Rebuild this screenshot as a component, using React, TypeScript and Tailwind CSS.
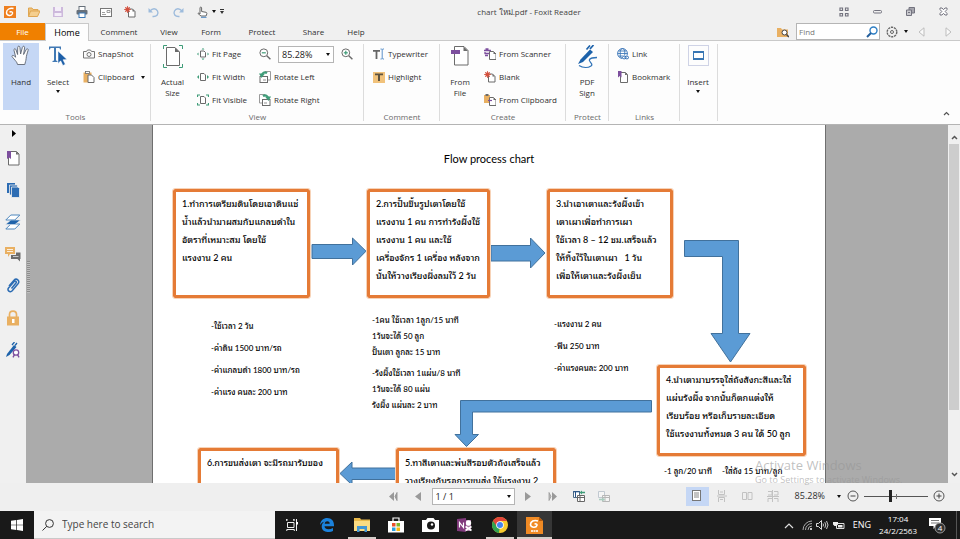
import React from "react";
import type { ReactNode } from "react";

const GREEN = "#3f9c78";
const PURPLE = "#7d4f9e";
const BLUE = "#2c6cb3";
const AMBER = "#e9b062";
const INK = "#6b6b6b";

type IconProps = { w?: number; h?: number; box?: string; children: ReactNode };

function Icon({ w = 12, h = 12, box, children }: IconProps) {
  return (
    <svg width={w} height={h} viewBox={box ?? `0 0 ${w} ${h}`} fill="none" className="shrink-0" aria-hidden="true">
      {children}
    </svg>
  );
}

function Caret({ className = "" }: { className?: string }) {
  return (
    <svg width="4" height="3" viewBox="0 0 4 3" className={`shrink-0 ${className}`} aria-hidden="true">
      <path d="M0 0h4L2 3z" fill="#111" />
    </svg>
  );
}

const PageShape = ({ x = 4, y = 3 }: { x?: number; y?: number }) => (
  <g transform={`translate(${x} ${y})`}>
    <path d="M.5.5h4l2.500 2.500v5.500h-6.500z" fill="#fff" stroke={INK} />
    <path d="M4.500.5v2.500H7z" fill={INK} />
  </g>
);

const Magnifier = ({ plus = false }: { plus?: boolean }) => (
  <Icon>
    <circle cx="4.800" cy="4.800" r="3.900" stroke={INK} fill="#fff" />
    <path d="M7.800 7.800l3.600 3.400" stroke={INK} strokeWidth="1.500" />
    <path d="M2.800 4.800h4" stroke={GREEN} strokeWidth="1.200" />
    {plus && <path d="M4.800 2.800v4" stroke={GREEN} strokeWidth="1.200" />}
  </Icon>
);

const FitPageIcon = () => (
  <Icon>
    <path d="M3.500 3h3.500l1.500 1.500V9h-5z" stroke={INK} fill="#fff" />
    <path d="M4.500 1.500L6 0l1.500 1.500zM4.500 10.500L6 12l1.500-1.500zM1.500 4.500L0 6l1.500 1.500zM10.500 4.500L12 6l-1.500 1.500z" fill={GREEN} />
  </Icon>
);
const FitWidthIcon = () => (
  <Icon>
    <path d="M3.500 2.500h3.500l1.500 1.500v5.500h-5z" stroke={INK} fill="#fff" />
    <path d="M2 4L0 6l2 2zM10 4l2 2-2 2z" fill={GREEN} />
  </Icon>
);
const FitVisibleIcon = () => (
  <Icon>
    <path d="M3.500 2.500h3.500l1.500 1.500v5.500h-5z" stroke={INK} fill="#fff" />
    <path d="M.500 3V1H3M9 1h2.500v2M.500 9v2H3M9 11h2.500V9" stroke={GREEN} strokeWidth="1.200" />
  </Icon>
);
const RotateIcon = ({ right = false }: { right?: boolean }) => (
  <Icon>
    <g transform={right ? "translate(12 0) scale(-1 1)" : undefined}>
      <path d="M6 .500h5.500v8.500h-2.500" stroke="#9a9a9a" fill="#fff" />
      <rect x="1" y="5.500" width="7.500" height="6" fill="#fff" stroke={INK} />
      <path d="M8 2.200C5.500.500 3 1.500 3 5" stroke={GREEN} strokeWidth="2" />
      <path d="M0 2.500h6L2.500 7z" fill={GREEN} />
      <path d="M4 8h3v2H4z" fill="#c8c8c8" />
    </g>
  </Icon>
);
const SnapshotIcon = () => (
  <Icon>
    <path d="M.500 3.500h3l1-1.500h3l1 1.500h3v6.500H.500z" stroke="#777" fill="#fafafa" />
    <circle cx="6" cy="6.500" r="2" stroke="#777" />
  </Icon>
);
const ClipboardIcon = () => (
  <Icon>
    <rect x=".500" y="1.500" width="8" height="10" fill={AMBER} />
    <rect x="2.500" y=".500" width="4" height="2" fill="#fff" stroke={INK} strokeWidth=".800" />
    <g transform="translate(4.500 3.500)">
      <path d="M.500.500h3.500l2.500 2.500v5h-6z" fill="#fff" stroke={INK} />
    </g>
  </Icon>
);
const TypewriterIcon = () => (
  <Icon>
    <path d="M0 2h7v1.800H4.400V11H2.600V3.800H0z" fill="#666" />
    <path d="M7.500 1h1.200l.500.500.500-.500H11M9.200 1.500v9M7.500 11h1.200l.500-.500.500.500H11" stroke="#4a86c5" strokeWidth=".900" />
  </Icon>
);
const HighlightIcon = () => (
  <Icon>
    <rect x="0" y="1" width="12" height="11" fill="#f1c27b" />
    <path d="M2 2.500h8v1.800H7V10H5V4.300H2z" fill="#5e5340" />
  </Icon>
);
const ScannerIcon = () => (
  <Icon>
    <path d="M0 2.500h7M1.500 1h3M.500 5.500h5M1 7.500h3M1 4v2" stroke={PURPLE} strokeWidth="1.300" />
    <PageShape x={5} y={3} />
  </Icon>
);
const BlankIcon = () => (
  <Icon>
    <PageShape x={4} y={2.5} />
    <circle cx="3.500" cy="3.500" r="2.200" fill="#d4503e" />
    <path d="M3.500 0v7M0 3.500h7M1 1l5 5M6 1L1 6" stroke="#d4503e" strokeWidth=".800" />
  </Icon>
);
const FromClipboardIcon = () => (
  <Icon>
    <rect x="0" y="1" width="6" height="8" fill={AMBER} />
    <rect x="1.500" y="0" width="3" height="2" fill={INK} />
    <PageShape x={5} y={3} />
    <path d="M4 6.500h4" stroke={PURPLE} strokeWidth="1.200" />
  </Icon>
);
const LinkIcon = () => (
  <Icon>
    <circle cx="5.500" cy="5.500" r="4.900" stroke={BLUE} strokeWidth=".900" />
    <ellipse cx="5.500" cy="5.500" rx="2.300" ry="4.900" stroke={BLUE} strokeWidth=".800" />
    <path d="M.600 5.500h10M1.500 3h8M1.500 8h5" stroke={BLUE} strokeWidth=".800" />
    <rect x="5" y="7.500" width="7" height="4" rx="2" fill="#fff" />
    <rect x="5.500" y="8.200" width="3.500" height="2.600" rx="1.300" stroke={BLUE} />
    <rect x="8" y="8.200" width="3.500" height="2.600" rx="1.300" stroke={BLUE} />
  </Icon>
);
const BookmarkIcon = () => (
  <Icon>
    <path d="M3.500 1.500h5l2 2v8h-7z" fill="#fff" stroke={INK} />
    <path d="M8 1.500v2.500h2.500z" fill={INK} />
    <path d="M1 0h3.500v6.500L2.800 5 1 6.500z" fill={PURPLE} />
  </Icon>
);

const HandIcon = () => (
  <Icon w={20} h={21}>
    <path
      d="M6.500 19.500c-.500-2.500-2-3.600-3.600-5.600C1.700 12.400.700 11.600 1 10.900c.600-1.100 2-.300 3.700 1.300L3 5.300c-.400-1.700 1.500-2.200 2-.500l1.600 4.700L6.700 2.500c0-1.800 2.100-1.800 2.200 0l.700 6.500L11.400 2.300c.500-1.700 2.400-1.300 2.200.500l-1 6.700L15.200 4.500c.900-1.400 2.400-.600 1.900.900-1.200 3.800-1.700 5.200-2 8.300-.200 2.500-.900 3.600-1.300 5.800z"
      fill="#fdfdfd"
      stroke="#5d6470"
      strokeWidth=".900"
    />
  </Icon>
);
const SelectIcon = () => (
  <Icon w={20} h={21}>
    <path d="M1 1.500h12v3h-1l-.500-1.500H8v12.500l1.500.500v1H4.500v-1l1.500-.500V3H2.500L2 4.500H1z" fill="#4179b4" />
    <path d="M10 6l9 8.500-4 .3 2.300 4.500-2.400 1.200-2.200-4.700L10 18.500z" fill="#1d5fa8" stroke="#fff" strokeWidth=".500" />
  </Icon>
);
const ActualSizeIcon = () => (
  <Icon w={20} h={23}>
    <path d="M3.500 2.500h8.500l4.500 4.500v13.500h-13z" fill="#fff" stroke={INK} />
    <path d="M12 2.500v4.500h4.500z" fill={INK} />
    <path d="M.500 4V.500H4M16 .500h3.500V4M.500 19v3.500H4M16 22.500h3.500V19" stroke={GREEN} />
  </Icon>
);
const FromFileIcon = () => (
  <Icon w={20} h={21}>
    <path d="M4.500 1.500h9.500l4 4v14.500h-13.500z" fill="#fff" stroke={INK} />
    <path d="M13.500 1.500v4.500h4.500z" fill={INK} />
    <rect x="1" y="5" width="9" height="4" fill={PURPLE} />
  </Icon>
);
const PdfSignIcon = () => (
  <Icon w={22} h={24}>
    <path d="M4.500 14.500L14 4.500l3 2.600L7 17l-5 2z" fill="#1d62aa" />
    <path d="M10.500 4.500L14 .500M14 4l3.500-4" stroke="#1d62aa" strokeWidth="1.700" />
    <path d="M3 20.500c4 2.500 9 2.500 12 .500 3-2.200-3-4.500-1.500-6.500s4-2 7.500-2" stroke="#3274b8" strokeWidth="1.300" />
  </Icon>
);
const InsertIcon = () => (
  <span className="flex h-[21px] w-[21px] items-center justify-center border border-[#cfd3e6]">
    <Icon w={11} h={9}>
      <rect x=".500" y=".500" width="10" height="8" fill="#fff" stroke="#3876b4" />
      <path d="M0 1h11M0 8h11" stroke="#3876b4" strokeWidth="2" />
    </Icon>
  </span>
);

function BigButton({ icon, lines, caret, active, className = "" }: { icon: ReactNode; lines: string[]; caret?: boolean; active?: boolean; className?: string }) {
  return (
    <button type="button" className={`flex h-[67px] flex-col items-center text-[8px] leading-[11px] ${active ? "bg-[#c5d7f5]" : ""} ${className}`}>
      <span className="flex h-[33px] items-start pt-0.5">{icon}</span>
      {lines.map((line) => (
        <span key={line} className="whitespace-nowrap">{line}</span>
      ))}
      {caret && <Caret className="mt-[3px]" />}
    </button>
  );
}

function Row({ icon, label, caret }: { icon: ReactNode; label: string; caret?: boolean }) {
  return (
    <button type="button" className="mb-px flex h-[22px] items-center gap-[3px] whitespace-nowrap text-[8px]">
      {icon}
      <span>{label}</span>
      {caret && <Caret className="ml-1" />}
    </button>
  );
}

function Group({ title, className = "", children }: { title: string; className?: string; children: ReactNode }) {
  return (
    <section aria-label={title || "Insert"} className={`relative flex shrink-0 flex-col pt-0.5 after:absolute after:right-0 after:top-[3px] after:bottom-[3px] after:w-px after:bg-[#dcdcdc] ${className}`}>
      <div className="flex h-[69px] items-start">{children}</div>
      <div className="text-center text-[8px] leading-[10px] text-[#6a6a6a]">{title}</div>
    </section>
  );
}

function QuickAccess() {
  const items: { name: string; icon: ReactNode }[] = [
    { name: "Foxit", icon: <FoxitMark /> },
    { name: "Open", icon: <Icon><path d="M.500 10.500V2h3.500l1 1.500h5V5" fill="#f0c27a" stroke="#dfa652" /><path d="M.500 10.500L2.500 5H12l-2.500 5.500z" fill="#f5cf8f" stroke="#dfa652" /></Icon> },
    { name: "Save", icon: <Icon><path d="M1 1h10v10H1z" fill="#cdb9dc" /><rect x="3" y="1" width="6" height="4" fill="#f4eef8" /><rect x="2.500" y="7" width="7" height="3" fill="#f4eef8" /></Icon> },
    { name: "Print", icon: <Icon><rect x="3" y=".500" width="6" height="4" fill="#fff" stroke="#67707a" /><rect x=".500" y="4" width="11" height="4.500" rx="1" fill="#67707a" /><rect x="3" y="7" width="6" height="4.500" fill="#fff" stroke="#3b78b5" /></Icon> },
    { name: "Email", icon: <Icon><rect x=".500" y="2.500" width="11" height="8" fill="#fff" stroke="#777" /><path d="M2 8.500h4M2 6.500h3M7 4.500h3v2H7z" stroke="#888" strokeWidth=".800" /></Icon> },
    { name: "New", icon: <BlankIcon /> },
    { name: "Undo", icon: <Icon><path d="M4.500 10.500C9 11 11 8 9.500 5S4.500 2 2 5" stroke="#9dbbdc" strokeWidth="1.400" /><path d="M.500 2v4.500H5z" fill="#9dbbdc" /></Icon> },
    { name: "Redo", icon: <Icon><path d="M7.500 10.500C3 11 1 8 2.500 5S7.500 2 10 5" stroke="#9dbbdc" strokeWidth="1.400" /><path d="M11.500 2v4.500H7z" fill="#9dbbdc" /></Icon> },
    { name: "Touch mode", icon: <Icon><path d="M4 8V2c0-1.300 1.600-1.300 1.600 0v3.500l4.400.800c.800.200 1 .900.800 1.700L10 10H5L2 7.500c.300-1 1.200-.600 2 .500z" fill="#fff" stroke="#666" /><path d="M5 11.300h5.500" stroke="#4a86c5" /></Icon> },
  ];
  return (
    <div className="flex items-center gap-3 pl-1">
      {items.map((i) => (
        <button key={i.name} type="button" aria-label={i.name}>{i.icon}</button>
      ))}
      <button type="button" aria-label="Touch mode options" className="-ml-2"><Caret /></button>
      <button type="button" aria-label="Customize" className="-ml-2">
        <svg width="4" height="5" viewBox="0 0 4 5"><path d="M0 0h4v1H0zM0 2h4L2 5z" fill="#333" /></svg>
      </button>
    </div>
  );
}

function FoxitMark() {
  return (
    <Icon>
      <rect width="12" height="12" fill="#ee7f1f" />
      <path d="M9.500 2.500C6 1.500 2.500 3.500 2.500 6.500c0 3.500 5 4 6 1 .400-1.300-.500-2.200-3-1.500" stroke="#fff" strokeWidth="1.400" />
    </Icon>
  );
}

function TitleBar() {
  return (
    <header className="relative flex h-[23px] shrink-0 items-center justify-between">
      <QuickAccess />
      <h1 className="absolute inset-x-0 pl-[98px] text-center text-[8px] font-normal text-[#444]">chart ใหม่.pdf - Foxit Reader</h1>
      <div className="relative flex items-center gap-6 pr-3">
        <button type="button" aria-label="Ribbon layout"><Icon w={10} h={10}><path d="M1 1h2.500v2.500H1zM6.500 1H9v2.500H6.500zM1 6.500h2.500V9H1zM6.500 6.500H9V9H6.500z" stroke="#73737f" strokeWidth="1.200" /></Icon></button>
        <button type="button" aria-label="Minimize"><Icon w={9} h={9}><rect x=".500" y="3.500" width="8" height="2.500" rx="1" stroke="#73737f" /></Icon></button>
        <button type="button" aria-label="Restore"><Icon w={9} h={9}><path d="M3 .500h5.500V6H3z" stroke="#73737f" fill="#a5a5ad" /><path d="M.500 3h5v5.500h-5z" stroke="#73737f" fill="#c9c9ce" /><path d="M2 5.500h2" stroke="#73737f" /></Icon></button>
        <button type="button" aria-label="Close"><Icon w={9} h={9}><path d="M1 1h2l1.500 1.700L6 1h2v1.500L6.200 4.500 8 6.500V8H6L4.500 6.300 3 8H1V6.500l1.800-2L1 2.500z" stroke="#73737f" fill="#fff" /></Icon></button>
      </div>
    </header>
  );
}

const TABS: [string, string][] = [
  ["Comment", "w-[60px]"],
  ["View", "w-[40px]"],
  ["Form", "w-[44px]"],
  ["Protect", "w-[58px]"],
  ["Share", "w-[45px]"],
  ["Help", "w-[40px]"],
];

function TabRow() {
  return (
    <nav className="flex h-[18px] shrink-0 items-stretch border-b border-[#c9c9c9] text-[8px]">
      <button type="button" className="w-[45px] bg-[#f08000] text-[8px] text-white">File</button>
      <button type="button" className="-mb-px w-[44px] border border-b-0 border-[#c9c9c9] bg-[#fdfdfd] text-[9px] font-medium text-black">Home</button>
      {TABS.map(([name, width]) => (
        <button key={name} type="button" className={width}>{name}</button>
      ))}
      <div className="ml-auto flex items-center pr-2">
        <button type="button" aria-label="Search folder" className="mr-[7px]">
          <Icon><path d="M0 2h4l1 1.500h6V11H0z" fill={AMBER} /><circle cx="7.500" cy="6.500" r="2.500" fill="#fff" stroke="#444" /><path d="M9.500 8.500l2.500 2.500" stroke="#444" strokeWidth="1.500" /></Icon>
        </button>
        <label className="flex h-[17px] w-[84px] items-center border border-[#b5b5b5] bg-white pl-0.5 pr-px">
          <input aria-label="Find" placeholder="Find" className="w-full min-w-0 text-[8px] outline-none placeholder:text-[#777]" />
          <Icon><circle cx="7.500" cy="4.500" r="3.500" stroke="#2f7fc4" strokeWidth="1.400" /><path d="M5 7L1 11" stroke="#235e9c" strokeWidth="2" /></Icon>
        </label>
        <button type="button" aria-label="Settings" className="ml-1.5">
          <Icon><circle cx="6" cy="6" r="4.800" stroke="#666" strokeDasharray="2.200 .8" strokeWidth="1.400" /><circle cx="6" cy="6" r="1.500" stroke="#666" /></Icon>
        </button>
        <Caret className="ml-1.5" />
        <button type="button" aria-label="Previous result" className="ml-2.5"><Icon w={7} h={10}><path d="M6 .800v8.400L1 5z" stroke="#bdbdbd" fill="#fafafa" /></Icon></button>
        <button type="button" aria-label="Next result" className="ml-5"><Icon w={7} h={10}><path d="M1 .800v8.400L6 5z" stroke="#bdbdbd" fill="#fafafa" /></Icon></button>
      </div>
    </nav>
  );
}

function Ribbon() {
  return (
    <div className="relative flex h-[84px] shrink-0 border-b border-[#b4b4b4] bg-[#fdfdfd]">
      <Group title="Tools" className="w-[151px]">
        <BigButton icon={<HandIcon />} lines={["Hand"]} active className="ml-[3px] w-9" />
        <BigButton icon={<SelectIcon />} lines={["Select"]} caret className="w-[38px]" />
        <div className="ml-1.5">
          <Row icon={<SnapshotIcon />} label="SnapShot" />
          <Row icon={<ClipboardIcon />} label="Clipboard" caret />
        </div>
      </Group>
      <Group title="View" className="w-[213px]">
        <BigButton icon={<ActualSizeIcon />} lines={["Actual", "Size"]} className="w-[43px]" />
        <div className="ml-[3px] w-[62px]">
          <Row icon={<FitPageIcon />} label="Fit Page" />
          <Row icon={<FitWidthIcon />} label="Fit Width" />
          <Row icon={<FitVisibleIcon />} label="Fit Visible" />
        </div>
        <div>
          <div className="mb-px flex h-[22px] items-center gap-[7px]">
            <button type="button" aria-label="Zoom out"><Magnifier /></button>
            <span className="relative flex items-center">
              <select aria-label="Zoom" className="h-[17px] w-14 appearance-none border border-[#b5b5b5] bg-white pl-[3px] text-[9px] leading-none text-[#222]">
                <option>85.28%</option>
              </select>
              <Caret className="pointer-events-none absolute right-1" />
            </span>
            <button type="button" aria-label="Zoom in"><Magnifier plus /></button>
          </div>
          <Row icon={<RotateIcon />} label="Rotate Left" />
          <Row icon={<RotateIcon right />} label="Rotate Right" />
        </div>
      </Group>
      <Group title="Comment" className="w-[76px]">
        <div className="pl-[9px]">
          <Row icon={<TypewriterIcon />} label="Typewriter" />
          <Row icon={<HighlightIcon />} label="Highlight" />
        </div>
      </Group>
      <Group title="Create" className="w-[126px]">
        <BigButton icon={<FromFileIcon />} lines={["From", "File"]} className="w-10" />
        <div className="ml-1">
          <Row icon={<ScannerIcon />} label="From Scanner" />
          <Row icon={<BlankIcon />} label="Blank" />
          <Row icon={<FromClipboardIcon />} label="From Clipboard" />
        </div>
      </Group>
      <Group title="Protect" className="w-[43px]">
        <BigButton icon={<PdfSignIcon />} lines={["PDF", "Sign"]} className="w-[42px]" />
      </Group>
      <Group title="Links" className="w-[71px]">
        <div className="pl-2">
          <Row icon={<LinkIcon />} label="Link" />
          <Row icon={<BookmarkIcon />} label="Bookmark" />
        </div>
      </Group>
      <Group title="" className="w-[38px]">
        <BigButton icon={<InsertIcon />} lines={["Insert"]} caret className="w-9" />
      </Group>
      <button type="button" aria-label="Collapse ribbon" className="mb-2 ml-auto mr-2.5 self-end">
        <Icon w={7} h={5}><path d="M1 4l2.500-2.500L6 4" stroke="#555" strokeWidth="1.200" /></Icon>
      </button>
    </div>
  );
}

function SidePanel() {
  const items: { name: string; icon: ReactNode }[] = [
    { name: "Bookmarks", icon: <Icon w={14} h={16}><path d="M2.500 1.500h8l2.500 2.500v11h-10.500z" fill="#fff" stroke={INK} /><path d="M10 1.500V4.500h3z" fill={INK} /><path d="M1 1h4v8L3 7.500 1 9z" fill={PURPLE} /></Icon> },
    { name: "Pages", icon: <Icon w={14} h={16}><path d="M1 1h8v10H1z" fill={BLUE} /><path d="M3.500 3h8v10h-8z" fill={BLUE} stroke="#f0f0f0" strokeWidth=".800" /><path d="M5.500 5H12l1.500 1.500V15.500h-8z" fill={BLUE} stroke="#f0f0f0" strokeWidth=".800" /></Icon> },
    { name: "Layers", icon: <Icon w={16} h={16}><path d="M.800 15h9l5-5h-9z" fill="#fff" stroke="#4f87bd" /><path d="M.500 10.500h9.500L15.500 6H6z" fill="#1f63ab" stroke="#f0f0f0" strokeWidth=".600" /><path d="M.800 6h9l5-5h-9z" fill="#fff" stroke="#4f87bd" /></Icon> },
    { name: "Comments", icon: <Icon w={16} h={16}><path d="M0 1h10v7H5l-2 3V8H0z" fill={AMBER} /><path d="M2 3.500h6M2 5.500h6" stroke="#fff" strokeWidth=".800" /><path d="M6 9h5V6.500h4.500V13H15v2.500L12.500 13H6z" fill="#6c6c6c" /><path d="M8 10.500h5.500" stroke="#ddd" strokeWidth=".800" /></Icon> },
    { name: "Attachments", icon: <Icon w={14} h={16}><path d="M5.500 10.500L10 5c1-1.200-.800-2.700-1.800-1.500L2.700 9.800c-2 2.500 1.300 5.500 3.500 3l5.800-7c2.300-3-1.500-6.300-4-3.500L3 8" stroke={BLUE} strokeWidth="1.500" /></Icon> },
    { name: "Security", icon: <Icon w={14} h={16}><path d="M3.500 7V4.500c0-4.500 7-4.500 7 0V7" stroke={AMBER} strokeWidth="1.700" /><rect x="1" y="6.500" width="12" height="9" fill={AMBER} /><path d="M6 9h2.500v4H6z" fill="#fff" /></Icon> },
    { name: "Signatures", icon: <Icon w={16} h={16}><path d="M2 12l7-9 2.500 2-7 8-3.500 2z" fill="#1d62aa" /><path d="M7 3l2.500-3M10 3.500l2-2.500" stroke="#1d62aa" strokeWidth="1.300" /><circle cx="11" cy="10.500" r="2.700" stroke={PURPLE} strokeWidth="1.300" fill="#fff" /><path d="M9.500 12.500L8 15.300M12.500 12.500l1.500 2.800" stroke={PURPLE} strokeWidth="1.400" /></Icon> },
  ];
  return (
    <aside className="flex w-[26px] shrink-0 flex-col bg-[#f0f0f0]">
      <button type="button" aria-label="Expand panel" className="flex h-[17px] items-center justify-center pl-0.5">
        <Icon w={4} h={7}><path d="M0 0v7l4-3.500z" fill="#000" /></Icon>
      </button>
      {items.map((i) => (
        <button key={i.name} type="button" aria-label={i.name} className="flex h-8 items-center justify-center">{i.icon}</button>
      ))}
    </aside>
  );
}

type Step = { place: string; lines: string[] };

const STEPS: Step[] = [
  { place: "left-[20px] top-[64px] w-[137px] h-[109px]", lines: ["1.ทำการเตรียมดินโดยเอาดินแช่", "น้ำแล้วนำมาผสมกับแกลบดำใน", "อัตราที่เหมาะสม โดยใช้", "แรงงาน 2 คน"] },
  { place: "left-[214px] top-[64px] w-[123px] h-[109px]", lines: ["2.การปั้นขึ้นรูปเตาโดยใช้", "แรงงาน 1 คน การทำรังผึ้งใช้", "แรงงาน 1 คน และใช้", "เครื่องจักร 1 เครื่อง หลังจาก", "นั้นให้วางเรียงผึ่งลมไว้ 2 วัน"] },
  { place: "left-[394px] top-[64px] w-[126px] h-[109px]", lines: ["3.นำเอาเตาและรังผึ้งเข้า", "เตาเผาเพื่อทำการเผา", "ใช้เวลา 8 – 12 ชม.เสร็จแล้ว", "ให้ทิ้งไว้ในเตาเผา   1 วัน", "เพื่อให้เตาและรังผึ้งเย็น"] },
  { place: "left-[504px] top-[240px] w-[149px] h-[91px]", lines: ["4.นำเตามาบรรจุใส่ถังสังกะสีและใส่", "แผ่นรังผึ้ง จากนั้นก็ตกแต่งให้", "เรียบร้อย หรือเก็บรายละเอียด", "ใช้แรงงานทั้งหมด 3 คน ได้ 50 ลูก"] },
  { place: "left-[243px] top-[323px] w-[160px] h-[91px]", lines: ["5.ทาสีเตาและพ่นสีรอบตัวถังเสร็จแล้ว", "วางเรียงกันรอการขนส่ง ใช้แรงงาน 2"] },
  { place: "left-[45px] top-[323px] w-[141px] h-[91px]", lines: ["6.การขนส่งเตา จะมีรถมารับของ"] },
];

const NOTES: { place: string; lines: string[] }[] = [
  { place: "left-[58px] top-[190px] leading-[22px]", lines: ["-ใช้เวลา 2 วัน", "-ค่าดิน 1500 บาท/รถ", "-ค่าแกลบดำ 1800 บาท/รถ", "-ค่าแรง คนละ 200 บาท"] },
  { place: "left-[219px] top-[187px] leading-[16px]", lines: ["-1คน ใช้เวลา 1ลูก/15 นาที", "1วันจะได้ 50 ลูก", "ปั้นเตา ลูกละ 15 บาท"] },
  { place: "left-[219px] top-[240px] leading-[16px]", lines: ["-รังผึ้งใช้เวลา 1แผ่น/8 นาที", "1วันจะได้ 80 แผ่น", "รังผึ้ง แผ่นละ 2 บาท"] },
  { place: "left-[401px] top-[188px] leading-[22px]", lines: ["-แรงงาน 2 คน", "-ฟืน 250 บาท", "-ค่าแรงคนละ 200 บาท"] },
  { place: "left-[511px] top-[338px] leading-[16px]", lines: ["-1 ลูก/20 นาที"] },
  { place: "left-[569px] top-[338px] leading-[16px]", lines: ["-ใส่ถัง 15 บาท/ลูก"] },
];

function Document() {
  return (
    <article className="relative h-full w-[672px] shrink-0 overflow-hidden bg-white font-[Lato,'Noto_Sans_Thai_Looped',Loma,Garuda,Waree,'Noto_Serif_Thai',serif] text-black shadow-[-1px_0_0_#6f6f6f,1px_0_0_#6f6f6f]">
      <h2 className="pt-[27px] text-center text-[11px] leading-[14px]">Flow process chart</h2>
      <svg className="absolute left-0 top-0" width="672" height="359" viewBox="153 125 672 359" fill="#5b9bd5" stroke="#41719c" aria-hidden="true">
        <path d="M312 244.500H352.500V238L366 251.200 352.500 265V258.500H312z" />
        <path d="M491 245.500H530.500V238L545 253 530.500 268V261H491z" />
        <path d="M684.500 240.500H738.500V333.500H750L730.500 362 711 333.500H722.500V256.500H684.500z" />
        <path d="M651.500 400.500H460.500V434.500H455L466.500 446.500 478.500 434.500H472.500V412H651.500z" />
        <path d="M396 468H352V462L340 473.500 352 485V479.500H396z" />
      </svg>
      {STEPS.map((s) => (
        <section key={s.place} className={`absolute whitespace-pre rounded-[2px] border-[3px] border-[#e57b36] pl-[6px] pt-[3px] text-[9px] font-medium leading-[18px] outline outline-[#f7d3b8] ${s.place}`}>
          {s.lines.map((l) => <p key={l}>{l}</p>)}
        </section>
      ))}
      {NOTES.map((n) => (
        <div key={n.place} className={`absolute whitespace-pre text-[8px] font-medium ${n.place}`}>
          {n.lines.map((l) => <p key={l}>{l}</p>)}
        </div>
      ))}
    </article>
  );
}

function Workspace() {
  return (
    <main className="relative flex min-h-0 flex-1">
      <SidePanel />
      <div className="relative flex min-w-0 flex-1 justify-center overflow-hidden bg-[#ababab] pl-1">
        <div className="absolute left-px top-[136px] h-8 w-[3px] bg-[repeating-linear-gradient(#8e8e8e_0_1px,#bdbdbd_1px_2px)]" />
        <Document />
      </div>
      <div className="flex w-3 shrink-0 flex-col items-center bg-[#f0f0f0] py-2.5">
        <Icon w={7} h={5}><path d="M1 4l2.500-2.500L6 4" stroke="#555" strokeWidth="1.500" /></Icon>
        <div className="mt-1 h-[266px] w-2.5 bg-[#cdcdcd]" />
        <span className="mt-auto -mb-1"><Icon w={7} h={5}><path d="M1 1l2.500 2.500L6 1" stroke="#555" strokeWidth="1.500" /></Icon></span>
      </div>
      <div className="pointer-events-none absolute left-[755px] top-[332px] z-10 whitespace-nowrap text-[#969696]/60">
        <p className="text-[13px] leading-[16px]">Activate Windows</p>
        <p className="text-[9px] leading-[14px]">Go to Settings to activate Windows.</p>
      </div>
    </main>
  );
}

function StatusBar() {
  return (
    <footer className="flex h-7 shrink-0 items-center bg-[#efefef] pb-0.5 pr-[15px] text-[8px]">
      <div className="flex flex-1 items-center justify-end pr-[76px]">
        <button type="button" aria-label="First page"><Icon w={9} h={9}><path d="M5 0v9L0 4.500z" fill="#999" /><path d="M8 .500v8L6 4.500z" fill="#999" stroke="#999" /></Icon></button>
        <button type="button" aria-label="Previous page" className="ml-[17px]"><Icon w={6} h={9}><path d="M6 0v9L0 4.500z" fill="#999" /></Icon></button>
        <span className="relative ml-[11px] flex items-center">
          <select aria-label="Page" className="h-[17px] w-[83px] appearance-none border border-[#b5b5b5] bg-white pl-[3px] text-[9px] leading-none text-[#222]">
            <option>1 / 1</option>
          </select>
          <Caret className="pointer-events-none absolute right-1" />
        </span>
        <button type="button" aria-label="Next page" className="ml-2.5"><Icon w={6} h={9}><path d="M0 0v9l6-4.500z" fill="#999" /></Icon></button>
        <button type="button" aria-label="Last page" className="ml-[17px]"><Icon w={9} h={9}><path d="M4 0v9l5-4.500z" fill="#999" /><path d="M1 .500v8l2-4z" fill="#bbb" stroke="#999" strokeWidth=".800" /></Icon></button>
        <button type="button" aria-label="Previous view" className="ml-4"><Icon><path d="M.500 1.500h6v6h-6z" fill="#fff" stroke="#4c6a86" /><path d="M0 1.800h7M2.500 2v5" stroke="#27558b" /><path d="M4.500 5.500h7v6h-7z" fill="#fff" stroke="#666" /><path d="M4.500 7.500h7M7 5.500v6" stroke="#666" /><path d="M6.500 2.500L9 .500v1.200h3v1.600H9v1.200z" fill={GREEN} /></Icon></button>
        <button type="button" aria-label="Next view" className="ml-[13px] opacity-40"><Icon><path d="M.500 1.500h6v6h-6z" fill="#fff" stroke="#7f92a5" /><path d="M4.500 5.500h7v6h-7z" fill="#fff" stroke="#666" /><path d="M4.500 7.500h7M7 5.500v6" stroke="#666" /><path d="M7 9.500L4.500 7.500v1.200H1v1.600h3.500v1.200z" fill={GREEN} /></Icon></button>
      </div>
      <button type="button" aria-label="Single page" className="flex h-[19px] w-[23px] items-center justify-center bg-[#c5d7f5]"><Icon w={10} h={12}><rect x=".500" y=".500" width="8" height="10" fill="#fff" stroke="#777" /><path d="M2 3h5M2 5h5M2 7h5" stroke="#888" /></Icon></button>
      <button type="button" aria-label="Continuous" className="ml-2"><Icon w={10} h={12}><path d="M1.500 0v4.500h6V0M1.500 12V7.500h6V12M0 6h10M3 2h3M3 9.500h3" stroke="#c2c2c2" /></Icon></button>
      <button type="button" aria-label="Facing" className="ml-[15px]"><Icon w={11} h={12}><path d="M.500 2.500h4v7h-4zM6 2.500h4v7H6z" stroke="#c2c2c2" /></Icon></button>
      <button type="button" aria-label="Continuous facing" className="ml-3.5"><Icon w={12} h={12}><path d="M1 1.500h4V5H1M7 1.500h4V5H7M0 6.500h12M5 8.500H1V12M7 8.500h4V12M5.500 0v12" stroke="#c2c2c2" /></Icon></button>
      <span className="ml-4 text-[9px]">85.28%</span>
      <Caret className="ml-3" />
      <button type="button" aria-label="Zoom out" className="ml-1.5"><Icon><circle cx="6" cy="6" r="5" stroke="#555" /><path d="M3.500 6h5" stroke="#444" /></Icon></button>
      <input
        type="range"
        aria-label="Zoom level"
        min={0}
        max={100}
        defaultValue={41}
        className="mx-[5px] h-3 w-16 appearance-none bg-[linear-gradient(#777,#777),linear-gradient(#555,#555)] bg-[length:1px_5px,100%_1px] bg-[position:50%_50%,center] bg-no-repeat [&::-webkit-slider-thumb]:h-3 [&::-webkit-slider-thumb]:w-[3px] [&::-webkit-slider-thumb]:appearance-none [&::-webkit-slider-thumb]:bg-[#222]"
      />
      <button type="button" aria-label="Zoom in"><Icon><circle cx="6" cy="6" r="5" stroke="#555" /><path d="M3.500 6h5M6 3.500v5" stroke="#444" /></Icon></button>
    </footer>
  );
}

function TaskBar() {
  const apps: { name: string; icon: ReactNode; bar?: string }[] = [
    { name: "Task view", icon: <Icon><path d="M0 .800h1.500M8.500.800H7M.800 0v2M8 0v2M1.500 3.500h6.500v5h-6.500zM.800 12v-1.500H8.300V12M10.500 0v12" stroke="#eee" /><rect x="10" y="3" width="2" height="2.500" fill="#fff" /></Icon> },
    { name: "Edge", icon: <Icon w={14} h={14}><path d="M0 7C.500 2.500 3.500 0 7.300 0 11.500 0 14 3 14 7v1.300H4.500c.200 3.500 5 3.700 8.500 1.700v3C8 15.300 1.700 13.800 1.700 8.500 1.700 6 3 4.500 4.800 3.500 2.800 3.800 1.200 5 0 7zm4.700-1.300h5c0-3-4.600-3.200-5 0z" fill="#1b82dc" /></Icon> },
    { name: "File Explorer", icon: <Icon w={16} h={14}><path d="M0 0h6l1 1.500h9V13H0z" fill="#e9b94a" /><path d="M0 3h16v10H0z" fill="#fbdc82" /><path d="M3 14V8h10v6h-2.500v-3h-5v3z" fill="#4397d3" /></Icon>, bar: "w-7" },
    { name: "Store", icon: <Icon w={16} h={16}><path d="M5 4V1h6v3" stroke="#fff" strokeWidth="1.200" /><path d="M0 4h16v11.500H0z" fill="#fff" /><path d="M4 6h3.500v3.500H4z" fill="#e8502e" /><path d="M8.500 6H12v3.500H8.500z" fill="#7db52b" /><path d="M4 10.500h3.500V14H4z" fill="#2a9fe0" /><path d="M8.500 10.500H12V14H8.500z" fill="#f6b813" /></Icon> },
    { name: "Camera", icon: <Icon w={17} h={14}><path d="M0 2h4l1.500-2h6L13 2h4v12H0z" fill="#fff" /><circle cx="9" cy="7.500" r="4" fill="#1a1a1a" /><circle cx="10" cy="6.500" r="1.200" fill="#fff" /></Icon> },
    { name: "OneNote", icon: <Icon w={16} h={14}><path d="M0 1l9-1v14l-9-1z" fill="#80397b" /><path d="M2.500 9.500v-5l4 5v-5" stroke="#fff" strokeWidth="1.200" /><path d="M9 2h5v11H9z" fill="#a878a4" /><circle cx="11.500" cy="5" r="2.700" fill="#fff" /><path d="M8.500 8.500l6 4M14.500 8.500l-6 4" stroke="#fff" strokeWidth="1.600" /></Icon> },
    { name: "Chrome", icon: <Icon w={16} h={16}><circle cx="8" cy="8" r="8" fill="#f9cb2e" /><path d="M8 8H8L1.070 4A8 8 0 0 0 7 15.950z" fill="#31a350" /><path d="M8 4h6.930A8 8 0 0 0 1.070 4L4.500 9z" fill="#e3453a" /><circle cx="8" cy="8" r="3.800" fill="#fff" /><circle cx="8" cy="8" r="3" fill="#4584ee" /></Icon>, bar: "w-7" },
    { name: "Foxit Reader", icon: <Icon w={17} h={17}><path d="M0 0h13l4 4v13H0z" fill="#f08a24" /><path d="M13 0v4h4z" fill="#b3590d" /><path d="M12 4C8 2.500 4.500 4.500 4.500 7.500s5.500 4 6.500.800c.300-1-.500-1.700-2.500-1.300" stroke="#fff" strokeWidth="1.600" /><path d="M5 14h7" stroke="#fff" strokeWidth="1.500" strokeDasharray="2 .5" /></Icon>, bar: "w-full" },
  ];
  return (
    <div className="flex h-7 shrink-0 items-stretch bg-[#191919] text-white">
      <button type="button" aria-label="Start" className="flex w-[34px] items-center justify-center">
        <Icon><path d="M0 1.700L5.300 1v4.700H0zM6 .900L12 0v5.700H6zM0 6.300h5.300V11L0 10.300zM6 6.300h6V12l-6-.900z" fill="#fff" /></Icon>
      </button>
      <label className="flex w-[241px] items-center gap-2 border-b border-[#c9c9c9] bg-[#f3f3f3] pl-2">
        <Icon><circle cx="7.500" cy="4.500" r="3.900" stroke="#333" /><path d="M4.800 7.300L.500 11.500" stroke="#333" /></Icon>
        <input aria-label="Search" placeholder="Type here to search" className="min-w-0 flex-1 text-[10px] outline-none placeholder:text-[#444]" />
      </label>
      <div className="grid w-[277px] grid-cols-8">
        {apps.map((a) => (
          <button key={a.name} type="button" aria-label={a.name} className={`relative flex items-center justify-center ${a.bar === "w-full" ? "bg-[#363636]" : ""}`}>
            {a.icon}
            {a.bar && <span className={`absolute bottom-0 h-0.5 bg-[#d4cfca] ${a.bar}`} />}
          </button>
        ))}
      </div>
      <div className="ml-auto flex items-center text-[8px]">
        <button type="button" aria-label="Hidden icons"><Icon w={10} h={7}><path d="M1 6l4-4 4 4" stroke="#ddd" strokeWidth="1.200" /></Icon></button>
        <span className="ml-2"><Icon w={10} h={10}><path d="M1 10A9 9 0 0 1 10 1M3.500 10A6.500 6.500 0 0 1 10 3.500M6 10a4 4 0 0 1 4-4" stroke="#aaa" /><circle cx="9" cy="9" r="1" fill="#fff" /></Icon></span>
        <span className="ml-1"><Icon w={13} h={10}><path d="M.500 3.500h2l3-3v9l-3-3h-2z" stroke="#ddd" /><path d="M7 3.500q1 1.500 0 3M8.800 2.200q2 2.800 0 5.600M10.500 1q3 4 0 8" stroke="#ddd" strokeWidth=".900" /></Icon></span>
        <span className="ml-1"><Icon w={12} h={9}><path d="M3.500 2.500h7.500v5h-7.500z" stroke="#ddd" /><path d="M5 4h4.500v2.500H5zM0 1h5v2.500L3.500 5H1.500L0 3.500z" fill="#eee" /></Icon></span>
        <span className="ml-2 text-[9px]">ENG</span>
        <time className="ml-2 text-center leading-[12px]">17:04<br />24/2/2563</time>
        <button type="button" aria-label="Notifications" className="ml-3 mr-2.5">
          <Icon w={17} h={17}><path d="M0 1h12v8H7l-2.500 3V9H0z" fill="#fff" /><path d="M2 3.500h8M2 6h8" stroke="#555" strokeWidth=".800" /><circle cx="11" cy="11" r="5" fill="#333" stroke="#999" /><text x="11" y="14" fontSize="8" textAnchor="middle" fill="#fff">4</text></Icon>
        </button>
        <span className="mr-[3px] h-7 w-px bg-[#555]" />
      </div>
    </div>
  );
}

export default function App() {
  return (
    <div className="flex h-screen flex-col overflow-hidden bg-[#f0f0f0] font-['Open_Sans','Noto_Sans',sans-serif] text-[#303030]">
      <TitleBar />
      <TabRow />
      <Ribbon />
      <Workspace />
      <StatusBar />
      <TaskBar />
    </div>
  );
}
